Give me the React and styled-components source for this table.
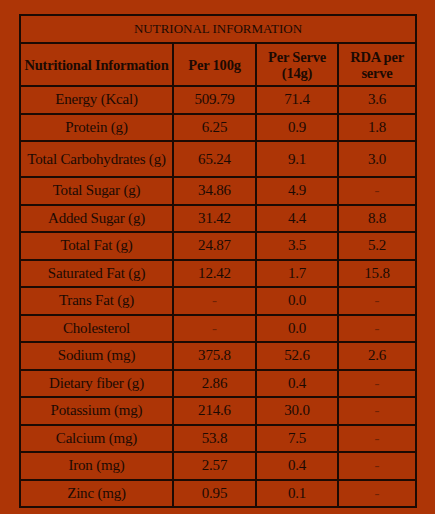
import React from "react";
import styled, { createGlobalStyle } from "styled-components";

const GlobalStyle = createGlobalStyle`
    html, body {
        margin: 0;
        padding: 0;
        background: #ad3506;
    }
    body {
        font-family: "Liberation Serif", "DejaVu Serif", serif;
        color: #1c0a03;
    }
`;

const Page = styled.div`
    width: 435px;
    height: 514px;
    background: #ad3506;
    padding: 14px 0 0 19px;
    box-sizing: border-box;
`;

const Table = styled.table`
    width: 396px;
    border-collapse: collapse;
    table-layout: fixed;
    font-size: 15px;
`;

const Cell = styled.td`
    border: 2px solid #1c0a03;
    text-align: center;
    vertical-align: middle;
    padding: 0 2px;
    height: ${(p) => p.$h || 25.5}px;
    line-height: 15px;
    white-space: nowrap;
    letter-spacing: -0.2px;
    color: ${(p) => (p.$faint ? "#6e2205" : "#1c0a03")};
`;

const Title = styled.th`
    border: 2px solid #1c0a03;
    height: 24px;
    font-weight: normal;
    font-size: 13px;
`;

const Head = styled.th`
    border: 2px solid #1c0a03;
    height: 41px;
    font-weight: bold;
    font-size: 14.5px;
    line-height: 16px;
    padding: 0 2px;
    letter-spacing: -0.2px;
`;

const rows = [
    ["Energy (Kcal)", "509.79", "71.4", "3.6"],
    ["Protein (g)", "6.25", "0.9", "1.8"],
    ["Total Carbohydrates (g)", "65.24", "9.1", "3.0", 34],
    ["Total Sugar (g)", "34.86", "4.9", "-"],
    ["Added Sugar (g)", "31.42", "4.4", "8.8"],
    ["Total Fat (g)", "24.87", "3.5", "5.2"],
    ["Saturated Fat (g)", "12.42", "1.7", "15.8"],
    ["Trans Fat (g)", "-", "0.0", "-"],
    ["Cholesterol", "-", "0.0", "-"],
    ["Sodium (mg)", "375.8", "52.6", "2.6"],
    ["Dietary fiber (g)", "2.86", "0.4", "-"],
    ["Potassium (mg)", "214.6", "30.0", "-"],
    ["Calcium (mg)", "53.8", "7.5", "-"],
    ["Iron (mg)", "2.57", "0.4", "-"],
    ["Zinc (mg)", "0.95", "0.1", "-"],
];

const App = () => {
    return (
        <Page>
            <GlobalStyle />
            <Table>
                <colgroup>
                    <col style={{ width: 153 }} />
                    <col style={{ width: 83 }} />
                    <col style={{ width: 82 }} />
                    <col style={{ width: 78 }} />
                </colgroup>
                <thead>
                    <tr>
                        <Title colSpan={4}>NUTRIONAL INFORMATION</Title>
                    </tr>
                    <tr>
                        <Head>Nutritional Information</Head>
                        <Head>Per 100g</Head>
                        <Head>Per Serve (14g)</Head>
                        <Head>RDA per serve</Head>
                    </tr>
                </thead>
                <tbody>
                    {rows.map(([name, a, b, c, h]) => (
                        <tr key={name}>
                            <Cell $h={h}>{name}</Cell>
                            <Cell $h={h} $faint={a === "-"}>{a}</Cell>
                            <Cell $h={h} $faint={b === "-"}>{b}</Cell>
                            <Cell $h={h} $faint={c === "-"}>{c}</Cell>
                        </tr>
                    ))}
                </tbody>
            </Table>
        </Page>
    );
};

export default App;
